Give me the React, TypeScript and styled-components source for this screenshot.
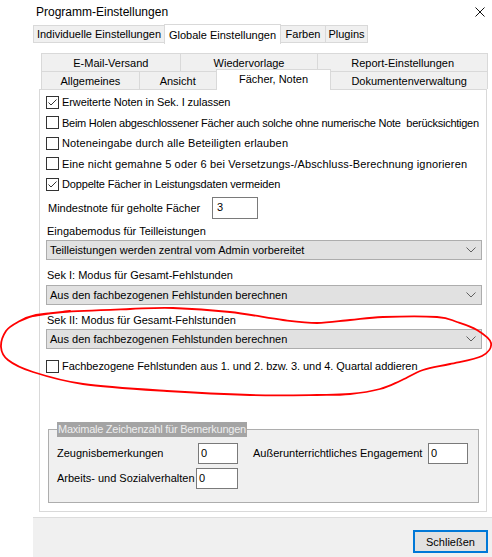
import React from "react";
import styled, { createGlobalStyle } from "styled-components";

const GlobalStyle = createGlobalStyle`
  html, body { margin: 0; padding: 0; background: #fff; }
  * { box-sizing: border-box; }
`;

const UI_FONT = `"Liberation Sans", Arial, sans-serif`;

const Window = styled.div`
  position: relative;
  width: 492px;
  height: 557px;
  background: #fff;
  display: flex;
  flex-direction: column;
  font-family: ${UI_FONT};
  font-size: 11px;
  color: #000;
  overflow: hidden;
`;

const TitleBar = styled.div`
  height: 24px;
  display: flex;
  align-items: center;
  padding: 0 7px 0 36px;
  font-size: 12px;
`;

const Title = styled.span`
  flex: 1;
`;

const CloseIcon = styled.svg`
  width: 10px;
  height: 10px;
  display: block;
`;

const Body = styled.div`
  flex: 1;
  display: flex;
  flex-direction: column;
  margin-left: 33px;
`;

const OuterTabStrip = styled.div`
  height: 20px;
  display: flex;
  align-items: flex-end;
`;

const OuterTab = styled.div<{ $w: number; $active?: boolean }>`
  width: ${(p) => p.$w}px;
  height: ${(p) => (p.$active ? 20 : 18)}px;
  margin-right: -1px;
  margin-bottom: ${(p) => (p.$active ? 0 : 1)}px;
  display: flex;
  align-items: center;
  justify-content: center;
  background: ${(p) => (p.$active ? "#fff" : "#f0f0f0")};
  border: 1px solid #d9d9d9;
  border-bottom: ${(p) => (p.$active ? "none" : "1px solid #d9d9d9")};
  position: relative;
  z-index: ${(p) => (p.$active ? 1 : 0)};
  white-space: nowrap;
`;

const OuterPage = styled.div`
  flex: 1;
  display: flex;
  flex-direction: column;
  padding: 9px 5px 5px 6px;
  background: #fff;
`;

const TabRow = styled.div`
  height: 18px;
  display: flex;
  align-items: flex-end;
  padding-left: 2px;
`;

const InnerTab = styled.div<{ $w: number; $active?: boolean }>`
  width: ${(p) => p.$w}px;
  height: ${(p) => (p.$active ? 21 : 18)}px;
  margin-right: -1px;
  margin-bottom: ${(p) => (p.$active ? -1 : 0)}px;
  display: flex;
  align-items: center;
  justify-content: center;
  background: ${(p) => (p.$active ? "#fff" : "#f0f0f0")};
  border: 1px solid #d9d9d9;
  border-bottom: none;
  position: relative;
  z-index: ${(p) => (p.$active ? 2 : 0)};
  padding-bottom: ${(p) => (p.$active ? 2 : 0)}px;
  white-space: nowrap;
`;

const Panel = styled.div`
  flex: 1;
  display: flex;
  flex-direction: column;
  border: 1px solid #d9d9d9;
  background: #fff;
  padding-top: 2px;
`;

const CheckRow = styled.label<{ $mt?: number; $ls?: number }>`
  height: 20.5px;
  margin-top: ${(p) => p.$mt ?? 0}px;
  display: flex;
  align-items: center;
  gap: 3px;
  padding-left: 6px;
  white-space: pre;
  letter-spacing: ${(p) => p.$ls ?? 0}px;
`;

const Box = styled.span`
  width: 13px;
  height: 13px;
  border: 1px solid #333;
  background: #fff;
  display: flex;
  align-items: center;
  justify-content: center;
  flex: none;
`;

const FieldRow = styled.div<{ $mt?: number; $pl?: number }>`
  display: flex;
  align-items: center;
  margin-top: ${(p) => p.$mt ?? 0}px;
  padding-left: ${(p) => p.$pl ?? 0}px;
`;

const FieldLabel = styled.span<{ $w: number }>`
  width: ${(p) => p.$w}px;
  flex: none;
  white-space: nowrap;
`;

const TextInput = styled.div<{ $w: number; $h: number; $pad?: number }>`
  width: ${(p) => p.$w}px;
  height: ${(p) => p.$h}px;
  border: 1px solid #7a7a7a;
  background: #fff;
  padding: 3px 0 0 ${(p) => p.$pad ?? 2}px;
  line-height: 13px;
  flex: none;
`;

const SectionLabel = styled.div<{ $mt: number }>`
  height: 14px;
  line-height: 14px;
  margin-top: ${(p) => p.$mt}px;
  padding-left: 7px;
`;

const Select = styled.div<{ $mt: number }>`
  width: 436px;
  height: 20px;
  margin: ${(p) => p.$mt}px 0 0 6px;
  border: 1px solid #adadad;
  background: #e1e1e1;
  display: flex;
  align-items: center;
  justify-content: space-between;
  padding: 0 5px 0 3px;
  white-space: nowrap;
`;

const Chevron = styled.svg`
  width: 10px;
  height: 6px;
  display: block;
`;

const Group = styled.fieldset`
  margin: 45px 0 0 8px;
  width: 431px;
  border: 1px solid #adadad;
  background: #f0f0f0;
  padding: 6px 8px 13px 8px;
  display: flex;
  flex-direction: column;
  gap: 4px;
  min-inline-size: 0;
`;

const Legend = styled.legend`
  background: #a4a4a4;
  color: #eeeeee;
  padding: 0 1px;
  height: 15px;
  line-height: 15px;
  font-size: 11px;
  letter-spacing: -0.25px;
`;

const GroupRow = styled.div`
  display: flex;
  align-items: center;
  height: 21px;
`;

const Spacer = styled.span<{ $w: number }>`
  width: ${(p) => p.$w}px;
  flex: none;
`;

const Footer = styled.div`
  height: 40px;
  background: #f0f0f0;
  border-top: 1px solid #dcdcdc;
  display: flex;
  justify-content: flex-end;
  align-items: flex-start;
  padding: 12px 4px 0 0;
`;

const Button = styled.div`
  width: 75px;
  height: 23px;
  border: 2px solid #0078d7;
  background: #e1e1e1;
  display: flex;
  align-items: center;
  justify-content: center;
`;

const Annotation = styled.svg`
  position: absolute;
  left: 0;
  top: 0;
  pointer-events: none;
  z-index: 5;
`;

type Pt = [number, number];

// Hand-drawn red loop, smoothed with a Catmull-Rom spline
const loopPoints: Pt[] = [
  [33, 316], [63, 312], [130, 309], [173, 308], [230, 312], [283, 320],
  [317, 323], [350, 320], [383, 317], [437, 317], [457, 322], [477, 330],
  [491, 343], [482, 356], [450, 364], [423, 370], [400, 381], [380, 389],
  [350, 394], [317, 395], [250, 395], [167, 391], [83, 384], [33, 372],
  [8, 360], [1, 347], [6, 331], [18, 322], [36, 315], [70, 311],
];

function smoothPath(pts: Pt[]): string {
  let d = `M${pts[0][0]},${pts[0][1]}`;
  for (let i = 0; i < pts.length - 1; i++) {
    const p0 = pts[i - 1] || pts[i];
    const p1 = pts[i];
    const p2 = pts[i + 1];
    const p3 = pts[i + 2] || p2;
    const c1x = p1[0] + (p2[0] - p0[0]) / 6;
    const c1y = p1[1] + (p2[1] - p0[1]) / 6;
    const c2x = p2[0] - (p3[0] - p1[0]) / 6;
    const c2y = p2[1] - (p3[1] - p1[1]) / 6;
    d += ` C${c1x.toFixed(1)},${c1y.toFixed(1)} ${c2x.toFixed(1)},${c2y.toFixed(1)} ${p2[0]},${p2[1]}`;
  }
  return d;
}

const loopPath = smoothPath(loopPoints);

const Check = ({ checked }: { checked?: boolean }) => (
  <Box>
    {checked && (
      <svg width="11" height="11" viewBox="0 0 11 11">
        <path d="M1.5 5.5 L4 8 L9.5 2.5" fill="none" stroke="#333" strokeWidth="1" />
      </svg>
    )}
  </Box>
);

const DropDown = ({ mt, value }: { mt: number; value: string }) => (
  <Select $mt={mt}>
    <span>{value}</span>
    <Chevron viewBox="0 0 10 6">
      <path d="M0.5 0.5 L5 5 L9.5 0.5" fill="none" stroke="#606060" strokeWidth="1" />
    </Chevron>
  </Select>
);

const checkOptions: { text: string; checked?: boolean; ls: number }[] = [
  { text: "Erweiterte Noten in Sek. I zulassen", checked: true, ls: -0.08 },
  { text: "Beim Holen abgeschlossener Fächer auch solche ohne numerische Note  berücksichtigen", ls: -0.26 },
  { text: "Noteneingabe durch alle Beteiligten erlauben", ls: 0.15 },
  { text: "Eine nicht gemahne 5 oder 6 bei Versetzungs-/Abschluss-Berechnung ignorieren", ls: 0.15 },
  { text: "Doppelte Fächer in Leistungsdaten vermeiden", checked: true, ls: -0.16 },
];

export default function App() {
  return (
    <>
      <GlobalStyle />
      <Window>
        <TitleBar>
          <Title>Programm-Einstellungen</Title>
          <CloseIcon viewBox="0 0 10 10">
            <path d="M0.5 0.5 L9.5 9.5 M9.5 0.5 L0.5 9.5" stroke="#111" strokeWidth="1" />
          </CloseIcon>
        </TitleBar>
        <Body>
          <OuterTabStrip>
            <OuterTab $w={132}>Individuelle Einstellungen</OuterTab>
            <OuterTab $w={117} $active>Globale Einstellungen</OuterTab>
            <OuterTab $w={46}>Farben</OuterTab>
            <OuterTab $w={43}>Plugins</OuterTab>
          </OuterTabStrip>
          <OuterPage>
            <TabRow>
              <InnerTab $w={140}>E-Mail-Versand</InnerTab>
              <InnerTab $w={139}>Wiedervorlage</InnerTab>
              <InnerTab $w={171}>Report-Einstellungen</InnerTab>
            </TabRow>
            <TabRow>
              <InnerTab $w={99}>Allgemeines</InnerTab>
              <InnerTab $w={78}>Ansicht</InnerTab>
              <InnerTab $w={116} $active>Fächer, Noten</InnerTab>
              <InnerTab $w={158}>Dokumentenverwaltung</InnerTab>
            </TabRow>
            <Panel>
              {checkOptions.map((o) => (
                <CheckRow key={o.text} $ls={o.ls}>
                  <Check checked={o.checked} />
                  <span>{o.text}</span>
                </CheckRow>
              ))}
              <FieldRow $mt={2} $pl={8}>
                <FieldLabel $w={164}>Mindestnote für geholte Fächer</FieldLabel>
                <TextInput $w={46} $h={22} $pad={4}>3</TextInput>
              </FieldRow>
              <SectionLabel $mt={5}>Eingabemodus für Teilleistungen</SectionLabel>
              <DropDown mt={2} value="Teilleistungen werden zentral vom Admin vorbereitet" />
              <SectionLabel $mt={8.5}>Sek I: Modus für Gesamt-Fehlstunden</SectionLabel>
              <DropDown mt={2.5} value="Aus den fachbezogenen Fehlstunden berechnen" />
              <SectionLabel $mt={8.5}>Sek II: Modus für Gesamt-Fehlstunden</SectionLabel>
              <DropDown mt={2} value="Aus den fachbezogenen Fehlstunden berechnen" />
              <CheckRow $mt={7} $ls={-0.05}>
                <Check />
                <span>Fachbezogene Fehlstunden aus 1. und 2. bzw. 3. und 4. Quartal addieren</span>
              </CheckRow>
              <Group>
                <Legend>Maximale Zeichenzahl für Bemerkungen</Legend>
                <GroupRow>
                  <FieldLabel $w={141}>Zeugnisbemerkungen</FieldLabel>
                  <TextInput $w={40} $h={21}>0</TextInput>
                  <Spacer $w={15} />
                  <FieldLabel $w={175}>Außerunterrichtliches Engagement</FieldLabel>
                  <TextInput $w={40} $h={21}>0</TextInput>
                </GroupRow>
                <GroupRow>
                  <FieldLabel $w={139}>Arbeits- und Sozialverhalten</FieldLabel>
                  <TextInput $w={42} $h={21}>0</TextInput>
                </GroupRow>
              </Group>
            </Panel>
          </OuterPage>
          <Footer>
            <Button>Schließen</Button>
          </Footer>
        </Body>
        <Annotation width="492" height="557" viewBox="0 0 492 557">
          <path d={loopPath} fill="none" stroke="#f00" strokeWidth="1.8" strokeLinecap="round" />
        </Annotation>
      </Window>
    </>
  );
}
